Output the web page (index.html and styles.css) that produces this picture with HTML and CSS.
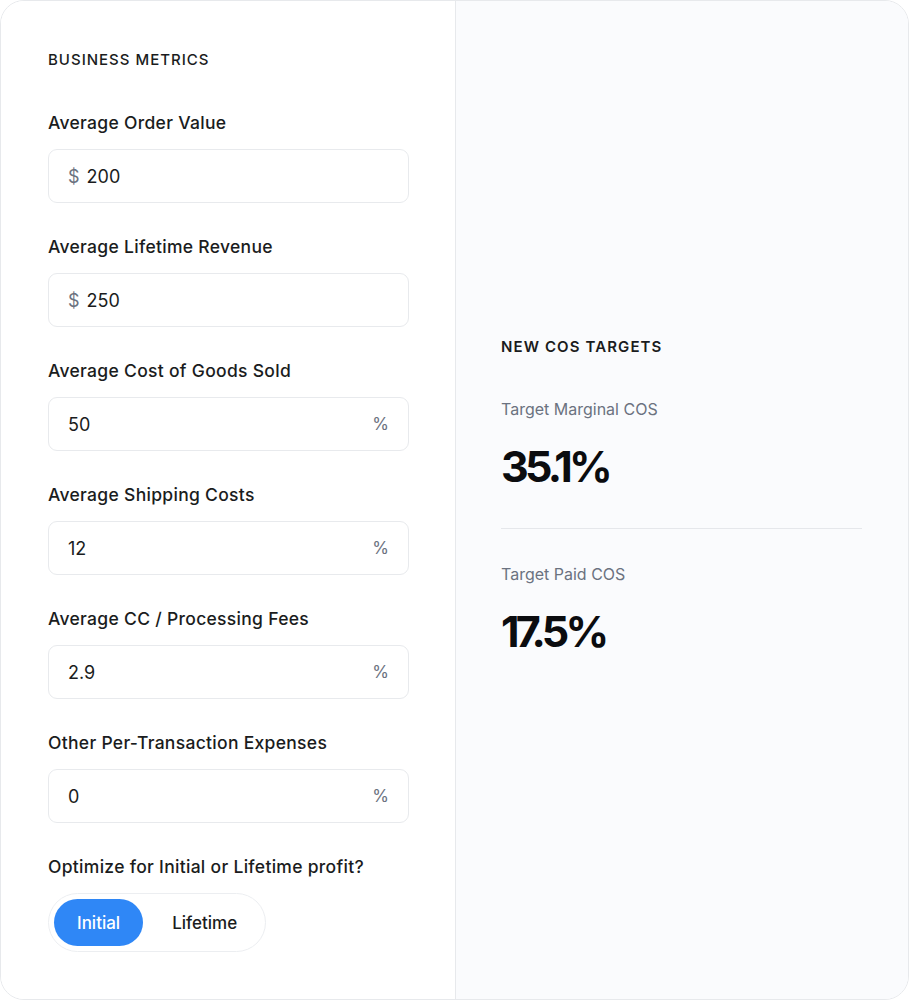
FILE: index.html
```html
<!DOCTYPE html>
<html lang="en">
<head>
<meta charset="UTF-8">
<title>COS Calculator</title>
<meta name="viewport" content="width=device-width, initial-scale=1.0">
<link rel="stylesheet" href="styles.css">
</head>
<body>
  <div class="calculator">
    <div class="inputs">
      <h2 class="section-title">BUSINESS METRICS</h2>

      <div class="field">
        <label>Average Order Value</label>
        <div class="input-box">
          <span class="prefix">$</span>
          <span class="value">200</span>
        </div>
      </div>

      <div class="field">
        <label>Average Lifetime Revenue</label>
        <div class="input-box">
          <span class="prefix">$</span>
          <span class="value">250</span>
        </div>
      </div>

      <div class="field">
        <label>Average Cost of Goods Sold</label>
        <div class="input-box">
          <span class="value">50</span>
          <span class="suffix">%</span>
        </div>
      </div>

      <div class="field">
        <label>Average Shipping Costs</label>
        <div class="input-box">
          <span class="value">12</span>
          <span class="suffix">%</span>
        </div>
      </div>

      <div class="field">
        <label>Average CC / Processing Fees</label>
        <div class="input-box">
          <span class="value">2.9</span>
          <span class="suffix">%</span>
        </div>
      </div>

      <div class="field">
        <label>Other Per-Transaction Expenses</label>
        <div class="input-box">
          <span class="value">0</span>
          <span class="suffix">%</span>
        </div>
      </div>

      <div class="field">
        <label>Optimize for Initial or Lifetime profit?</label>
        <div class="toggle">
          <button class="toggle-btn active">Initial</button>
          <button class="toggle-btn">Lifetime</button>
        </div>
      </div>
    </div>

    <div class="results">
      <h2 class="section-title">NEW COS TARGETS</h2>
      <div class="result">
        <div class="result-label">Target Marginal COS</div>
        <div class="result-value">35.1%</div>
      </div>
      <hr class="divider">
      <div class="result">
        <div class="result-label">Target Paid COS</div>
        <div class="result-value">17.5%</div>
      </div>
    </div>
  </div>
</body>
</html>
```

FILE: styles.css
```css
* {
  box-sizing: border-box;
}
body {
  font-family: Inter, 'Noto Sans', sans-serif;
  color: #111318;
  margin: 0;
  padding: 0;
  background: #fff;
}
.calculator {
  width: 909px;
  height: 1000px;
  display: grid;
  grid-template-columns: 455px 1fr;
  border: 1px solid #e7e9ec;
  border-radius: 24px;
  overflow: hidden;
}
.inputs {
  background: #fff;
  padding: 49px 46px 0 47px;
  border-right: 1px solid #e7e9ec;
}
.section-title {
  margin: 0;
  font-size: 15px;
  line-height: 20px;
  font-weight: 500;
  letter-spacing: 1px;
  color: #1a1c20;
}
.inputs .section-title {
  margin-bottom: 41px;
}
.field {
  margin-bottom: 32px;
}
.field label {
  display: block;
  font-size: 17.5px;
  line-height: 24px;
  font-weight: 500;
  letter-spacing: 0.3px;
  color: #1a1c20;
  margin-bottom: 14px;
}
.input-box {
  display: flex;
  align-items: center;
  gap: 7px;
  height: 54px;
  padding: 0 19px;
  border: 1px solid #e8eaed;
  border-radius: 9px;
  font-size: 18px;
}
.prefix {
  color: #6b7280;
}
.value {
  flex: 1;
  color: #1a1c20;
}
.suffix {
  color: #6b7280;
  font-size: 17px;
}
.toggle {
  display: inline-flex;
  gap: 6px;
  padding: 5px;
  border: 1px solid #eceef1;
  border-radius: 999px;
}
.toggle-btn {
  height: 47px;
  padding: 0 23px;
  border: none;
  border-radius: 999px;
  background: transparent;
  font-family: inherit;
  font-size: 17px;
  font-weight: 500;
  color: #1a1c20;
}
.toggle-btn.active {
  background: #2f87f6;
  color: #fff;
}
.results {
  background: #fafbfd;
  padding: 336px 46px 0 45px;
}
.results .section-title {
  font-weight: 600;
  letter-spacing: 1.1px;
  margin-bottom: 40px;
}
.result-label {
  font-size: 16px;
  line-height: 24px;
  color: #6b7280;
  margin-bottom: 19px;
}
.result-value {
  font-size: 43px;
  line-height: 52px;
  font-weight: 700;
  letter-spacing: -3.8px;
  color: #0b0c0f;
}
.divider {
  border: none;
  border-top: 1px solid #e5e7eb;
  margin: 36px 0 33px;
}
```
